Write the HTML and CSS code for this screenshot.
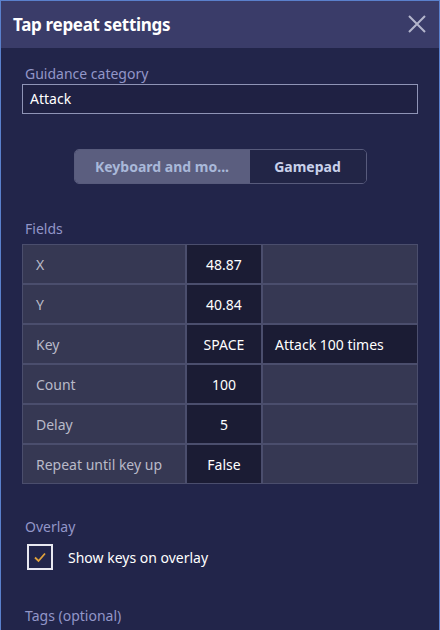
FILE: index.html
```html
<!DOCTYPE html>
<html>
<head>
<meta charset="utf-8">
<link rel="stylesheet" href="styles.css">
</head>
<body>
<div class="window">
  <div class="titlebar">
    <span class="title">Tap repeat settings</span>
    <svg class="close" width="20" height="20" viewBox="0 0 20 20"><path d="M2 2 L18 18 M18 2 L2 18" stroke="#b4b6cc" stroke-width="2" fill="none"/></svg>
  </div>
  <div class="content">
    <div class="label first">Guidance category</div>
    <div class="input">Attack</div>
    <div class="seg-wrap">
      <div class="seg">
        <div class="seg-item active">Keyboard and mo...</div>
        <div class="seg-item">Gamepad</div>
      </div>
    </div>
    <div class="label fields">Fields</div>
    <div class="table">
      <div class="cell name">X</div><div class="cell val">48.87</div><div class="cell extra"></div>
      <div class="cell name">Y</div><div class="cell val">40.84</div><div class="cell extra"></div>
      <div class="cell name">Key</div><div class="cell val">SPACE</div><div class="cell extra dark">Attack 100 times</div>
      <div class="cell name">Count</div><div class="cell val">100</div><div class="cell extra"></div>
      <div class="cell name">Delay</div><div class="cell val">5</div><div class="cell extra"></div>
      <div class="cell name">Repeat until key up</div><div class="cell val">False</div><div class="cell extra"></div>
    </div>
    <div class="label overlay">Overlay</div>
    <div class="check-row">
      <span class="checkbox"><svg width="14" height="12" viewBox="0 0 14 12"><path d="M2 6.5 L5.5 10 L12 2.5" stroke="#e0a23c" stroke-width="1.8" fill="none"/></svg></span>
      <span class="check-text">Show keys on overlay</span>
    </div>
    <div class="label tags">Tags (optional)</div>
  </div>
</div>
</body>
</html>
```

FILE: styles.css
```css
html, body {
  margin: 0;
  padding: 0;
  background: #22254a;
}
body {
  font-family: "Noto Sans", "Open Sans", sans-serif;
  font-size: 14px;
}
.window {
  width: 438px;
  height: 629px;
  border-left: 1px solid #5a80cc;
  border-right: 1px solid #5a80cc;
  border-top: 1px solid #5a80cc;
  overflow: hidden;
  background: #22254a;
}
.titlebar {
  height: 47px;
  background: #3a3c69;
  display: flex;
  align-items: center;
  justify-content: space-between;
  padding: 0 12px 0 12px;
}
.title {
  color: #ffffff;
  font-weight: bold;
  font-size: 17px;
  letter-spacing: -0.3px;
}
.close {
  display: block;
  margin-top: -2px;
}
.content {
  padding: 0 20px 0 20px;
}
.label {
  color: #9296c8;
  font-size: 14px;
  line-height: 20px;
  padding-left: 4px;
}
.label.first {
  margin-top: 16px;
}
.input {
  height: 28px;
  border: 1px solid #8f94b6;
  background: #1f2143;
  color: #ffffff;
  line-height: 28px;
  padding-left: 7px;
  margin-left: 1px;
  margin-right: 1px;
}
.seg-wrap {
  display: flex;
  justify-content: center;
  margin-top: 35px;
}
.seg {
  display: flex;
  height: 33px;
  border: 1px solid #585b7c;
  border-radius: 5px;
  overflow: hidden;
}
.seg-item {
  display: flex;
  align-items: center;
  justify-content: center;
  font-weight: bold;
  font-size: 14px;
  color: #c9d1ea;
  background: #222546;
  width: 116px;
}
.seg-item.active {
  width: 175px;
  background: #5b5e7f;
  color: #a9b8d9;
}
.label.fields {
  margin-top: 35px;
}
.table {
  margin-top: 5px;
  margin-left: 1px;
  margin-right: 1px;
  display: grid;
  grid-template-columns: 162px 74px 1fr;
  grid-auto-rows: 38px;
  gap: 2px;
  padding: 1px;
  background: #4b4e6d;
}
.cell {
  background: #363853;
  display: flex;
  align-items: center;
  color: #ffffff;
}
.cell.name {
  color: #b9bac8;
  padding-left: 13px;
}
.cell.val {
  background: #1b1c34;
  justify-content: center;
}
.cell.extra.dark {
  background: #1b1c34;
  padding-left: 12px;
}
.label.overlay {
  margin-top: 33px;
}
.check-row {
  display: flex;
  align-items: center;
  margin-top: 7px;
  padding-left: 6px;
}
.checkbox {
  width: 22px;
  height: 22px;
  border: 2px solid #e8e8f0;
  display: flex;
  align-items: center;
  justify-content: center;
}
.check-text {
  color: #ffffff;
  margin-left: 15px;
}
.label.tags {
  margin-top: 36px;
}
```
